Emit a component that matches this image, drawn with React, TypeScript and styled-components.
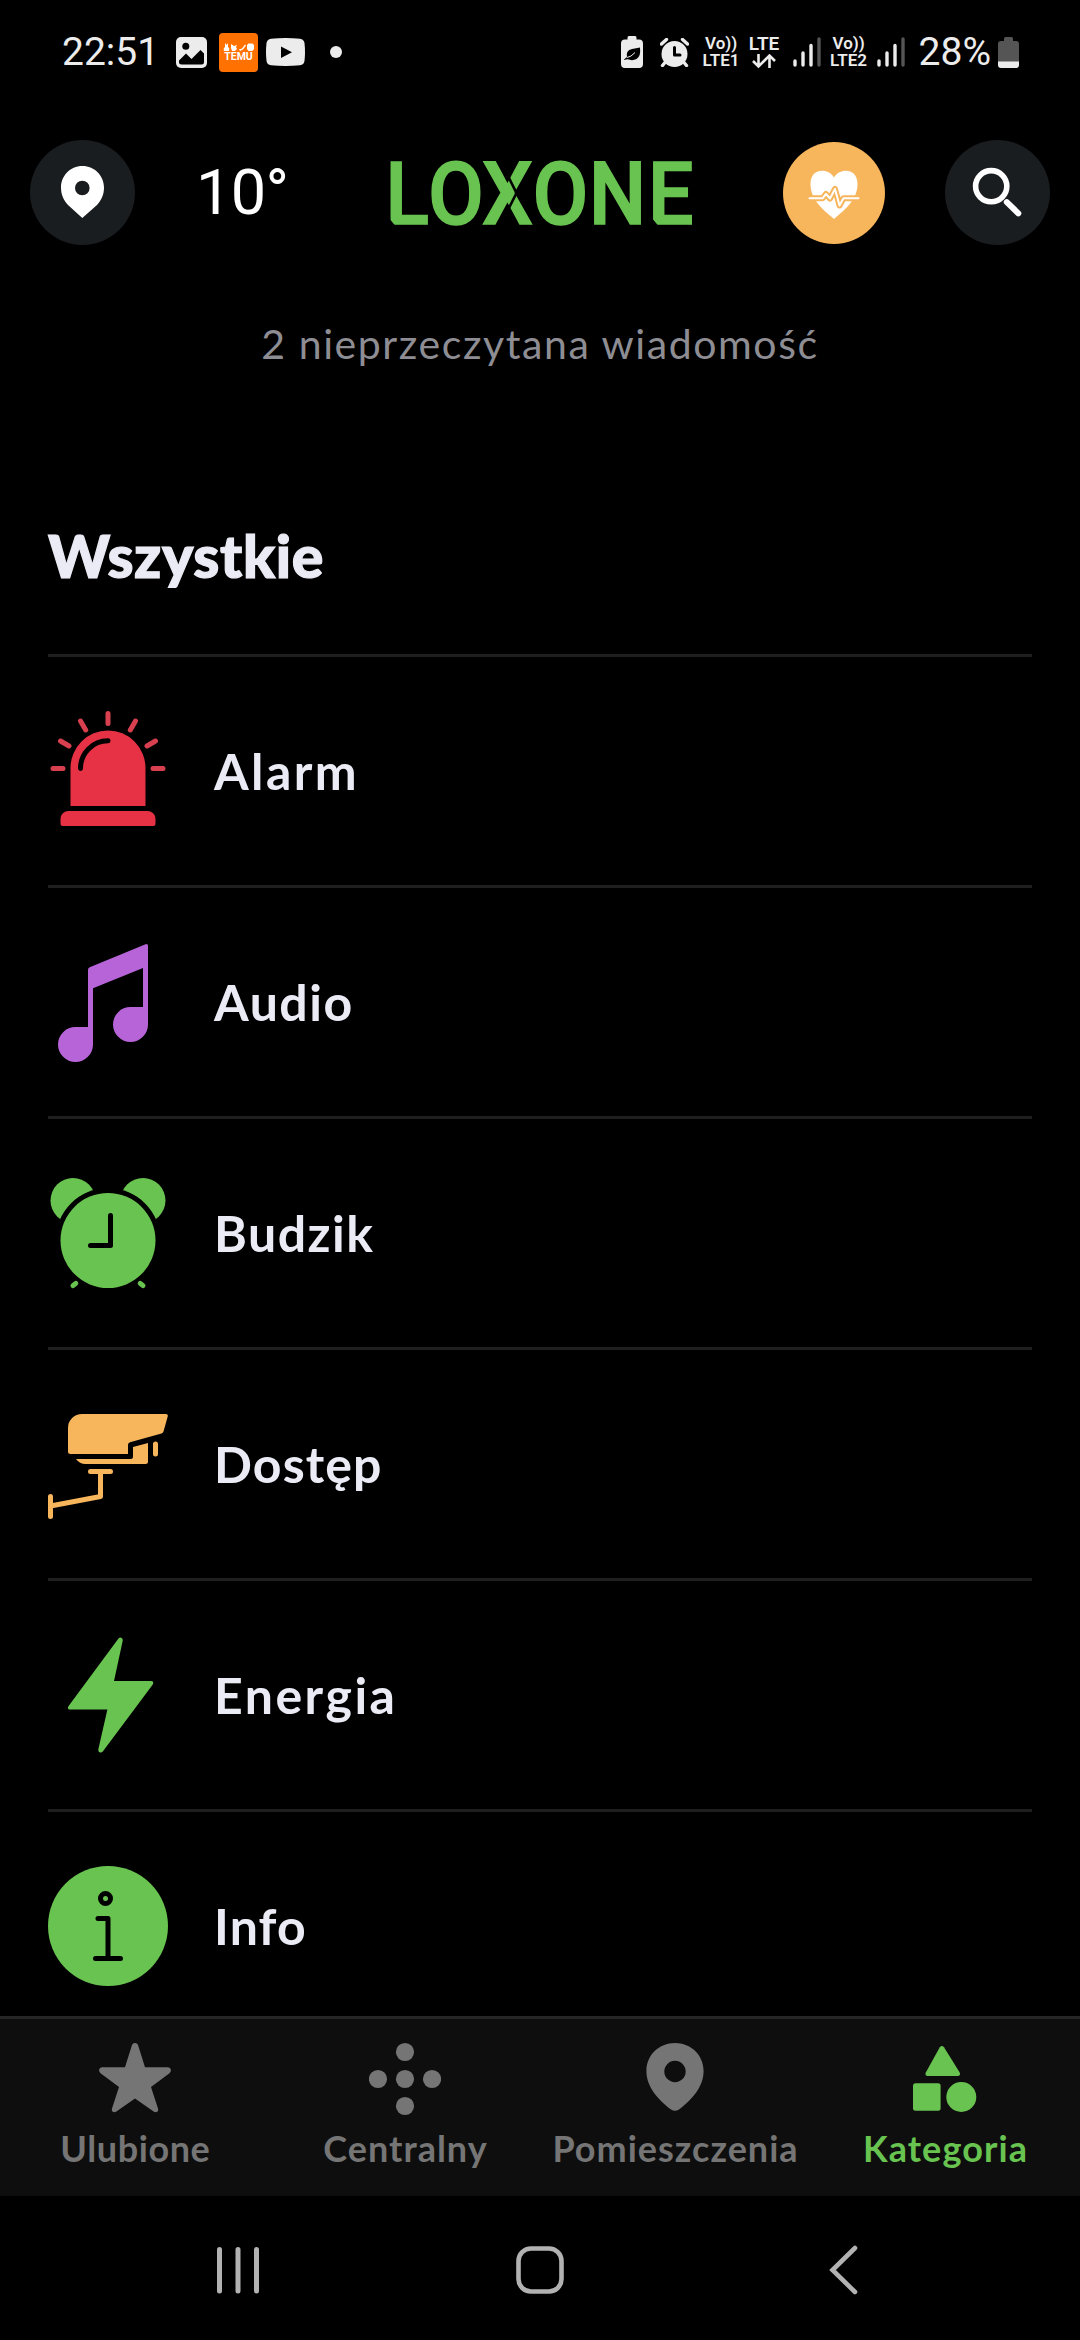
import React from "react";
import styled, { createGlobalStyle } from "styled-components";

const GREEN = "#69C350";
const RED = "#E73246";
const ORANGE = "#F7B55C";
const PURPLE = "#B764D9";
const STATUS = "#ECECEC";
const brand = '"Lato", "Open Sans", sans-serif';
const system = '"Roboto", "Noto Sans", sans-serif';

const GlobalStyle = createGlobalStyle`
  * { box-sizing: border-box; }
  body { margin: 0; background: #000; }
`;

const Screen = styled.div`
  width: 1080px;
  height: 2340px;
  display: flex;
  flex-direction: column;
  background: #000;
  overflow: hidden;
  white-space: nowrap;
  svg { display: block; flex: none; }
`;

/* ---------- status bar ---------- */
const StatusBar = styled.header`
  height: 104px;
  flex: none;
  padding: 0 61px 0 62px;
  display: flex;
  justify-content: space-between;
  align-items: center;
  font-family: ${system};
  color: ${STATUS};
`;
const StatusGroup = styled.div`
  display: flex;
  align-items: center;
  height: 40px;
`;
const StatusText = styled.span<{ $width: number }>`
  width: ${(p) => p.$width}px;
  font-size: 39px;
  line-height: 40px;
`;
const Slot = styled.div<{ $left: number }>`
  margin-left: ${(p) => p.$left}px;
  flex: none;
`;
const TemuBadge = styled.div`
  width: 39px;
  height: 39px;
  border-radius: 4px;
  background: #ff7100;
  color: #fff;
  display: flex;
  flex-direction: column;
  align-items: center;
  padding-top: 10px;
  font-size: 10.5px;
  line-height: 11px;
  font-weight: 700;
`;
const Carrier = styled.div<{ $width: number }>`
  width: ${(p) => p.$width}px;
  display: flex;
  flex-direction: column;
  align-items: center;
  font-weight: 600;
  font-size: 17px;
  line-height: 17px;
`;
const NetworkType = styled(Carrier)`
  font-size: 19px;
`;

/* ---------- app header ---------- */
const TopBar = styled.div`
  height: 177px;
  flex: none;
  padding: 0 30px;
  display: flex;
  align-items: center;
`;
const Round = styled.div<{ $size: number; $color: string; $left?: number }>`
  width: ${(p) => p.$size}px;
  height: ${(p) => p.$size}px;
  margin-left: ${(p) => p.$left ?? 0}px;
  border-radius: 50%;
  background: ${(p) => p.$color};
  flex: none;
`;
const Temperature = styled.div`
  width: 169px;
  margin-left: 61px;
  font-family: ${system};
  font-size: 63px;
  line-height: 70px;
  letter-spacing: -0.7px;
  color: #fff;
`;
const Message = styled.p`
  margin: 0;
  height: 128px;
  flex: none;
  padding-top: 36px;
  text-align: center;
  font-family: ${brand};
  font-size: 41px;
  line-height: 54px;
  letter-spacing: 1.57px;
  color: #8d8d93;
`;

/* ---------- category list ---------- */
const Content = styled.main`
  flex: none;
  height: 1607px;
  padding: 0 48px;
  overflow: hidden;
`;
const Heading = styled.h1`
  margin: 0;
  height: 245px;
  padding-top: 111px;
  font-family: ${brand};
  font-weight: 900;
  font-size: 59px;
  line-height: 72px;
  letter-spacing: 0.6px;
  -webkit-text-stroke: 1.2px #ebebf5;
  color: #ebebf5;
`;
const Row = styled.div`
  height: 231px;
  border-top: 3px solid #1f1f1f;
  display: flex;
  align-items: center;
  gap: 46px;
`;
const RowLabel = styled.span<{ $spacing: number }>`
  font-family: ${brand};
  font-weight: 700;
  font-size: 50px;
  line-height: 60px;
  letter-spacing: ${(p) => p.$spacing}px;
  color: #ebebf5;
`;

/* ---------- bottom bars ---------- */
const TabBar = styled.nav`
  height: 180px;
  flex: none;
  border-top: 3px solid #262626;
  background: #0e0e0e;
  display: grid;
  grid-template-columns: repeat(4, 1fr);
`;
const Tab = styled.div<{ $active?: boolean }>`
  display: flex;
  flex-direction: column;
  align-items: center;
  padding-top: 20px;
  gap: 9px;
  color: ${(p) => (p.$active ? GREEN : "#757575")};
`;
const TabLabel = styled.span<{ $spacing: number }>`
  font-family: ${brand};
  font-weight: 700;
  font-size: 36px;
  line-height: 44px;
  letter-spacing: ${(p) => p.$spacing}px;
  margin-right: -${(p) => p.$spacing}px;
`;
const SystemNav = styled.footer`
  height: 144px;
  flex: none;
  padding: 4px 214px 0;
  display: flex;
  align-items: center;
  justify-content: space-between;
`;

const Signal = () => (
  <svg width="28" height="30" viewBox="0 0 28 30" stroke={STATUS} strokeWidth="3.4" strokeLinecap="round">
    <path d="M2 24v4M10 16v12M18 8.500v19.500" />
    <path d="M26 2v26" stroke="#555" />
  </svg>
);

const VoLte = ({ line, width }: { line: string; width: number }) => (
  <Carrier $width={width}>
    <span>Vo))</span>
    <span>{line}</span>
  </Carrier>
);

const Logo = () => (
  <svg width="350" height="130" viewBox="365 127 350 130" overflow="visible">
    <text
      transform="scale(.92 1)"
      x="418.900 465.600 524 579 640.300 704.300"
      y="223"
      fontFamily="Roboto, sans-serif"
      fontWeight="500"
      fontSize="87.500"
      fill={GREEN}
      stroke={GREEN}
      strokeWidth="1.600"
    >
      LOXONE
    </text>
    <path d="M507 173L516.500 192L507 211" fill="none" stroke="#000" strokeWidth="2.600" />
    <path d="M388 216v9h7.500zM651 216v9h7.500z" />
  </svg>
);

const AlarmIcon = () => (
  <svg width="120" height="120" fill={RED}>
    <path d="M22.500 95V57a37.500 37.500 0 0 1 75 0v38z" />
    <path d="M12.500 112.500V108a8 8 0 0 1 8-8h79a8 8 0 0 1 8 8v4.500q0 2.500-2.500 2.500H15q-2.500 0-2.500-2.500z" />
    <path d="M32.500 57.500A27.500 27.500 0 0 1 60 29.800" fill="none" stroke="#000" strokeWidth="5" strokeLinecap="round" />
    <path
      d="M60 2.500v10M5 57.500h10M105 57.500h10M12.500 30l8.500 5M107.500 30l-8.500 5M32.500 10l5.200 9M87.500 10l-5.200 9"
      stroke="#D9404F"
      strokeWidth="5"
      strokeLinecap="round"
    />
  </svg>
);
const AudioIcon = () => (
  <svg width="120" height="120" fill={PURPLE}>
    <path d="M45 102.500A17.500 17.500 0 1 1 27.500 85H40V28q0-2 1.700-2.700L97 2.400q3-1 3 1.600v78.500A17.500 17.500 0 1 1 82.500 65H95V26L45 46.300z" />
  </svg>
);
const ClockIcon = () => (
  <svg width="120" height="120" fill={GREEN}>
    <circle cx="25" cy="27.500" r="22.500" />
    <circle cx="95" cy="27.500" r="22.500" />
    <circle cx="60" cy="67.500" r="52.500" fill="#000" />
    <circle cx="60" cy="67.500" r="47.500" />
    <path d="M62.500 42.500v30h-20" fill="none" stroke="#000" strokeWidth="5" strokeLinecap="round" strokeLinejoin="round" />
    <path d="M25 112.700l2.800-2.400M95 112.700l-2.800-2.400" stroke={GREEN} strokeWidth="5" strokeLinecap="round" />
  </svg>
);
const CameraIcon = () => (
  <svg width="120" height="120" fill={ORANGE}>
    <path d="M34 10h84q2.300 0 1.700 2.500l-4.200 15q-.5 1.600-2 2L82 38.300q-2 .5-2 2.500V50H22.500Q20 50 20 47.500V24a14 14 0 0 1 14-14z" />
    <path d="M28 55h54.500q2.500 0 2.500-2.500V43l15-4v18.500q0 2.500-2.500 2.500h-60q-6 0-9.500-5z" />
    <path
      d="M107.500 40v10M42.500 67.500h20M52.500 67.500v25l-50 9.500M2.500 92.500v20"
      fill="none"
      stroke={ORANGE}
      strokeWidth="5"
      strokeLinecap="round"
      strokeLinejoin="round"
    />
  </svg>
);
const BoltIcon = () => (
  <svg width="120" height="120" fill={GREEN}>
    <path d="M70.500 3.400q1.600-1.400 3.200-.5q1.400.8 1 2.900L66 46h37q2 0 2.200 1.300q.2 1.200-.6 2.500L55 116.200q-1.600 1.800-3.400 1q-1.600-.7-1.300-2.700L59.400 74.500H22q-1.900 0-2.100-1.300q-.1-1 .7-2.200z" />
  </svg>
);
const InfoIcon = () => (
  <svg width="120" height="120" fill="none" stroke="#000" strokeWidth="5" strokeLinecap="round" strokeLinejoin="round">
    <circle cx="60" cy="60" r="60" fill={GREEN} stroke="none" />
    <circle cx="57.500" cy="32.500" r="5" />
    <path d="M50 52.500h10v40M47.500 92.500h25" />
  </svg>
);

const categories = [
  { label: "Alarm", icon: <AlarmIcon />, spacing: 2.4 },
  { label: "Audio", icon: <AudioIcon />, spacing: 1.5 },
  { label: "Budzik", icon: <ClockIcon />, spacing: 1.5 },
  { label: "Dostęp", icon: <CameraIcon />, spacing: 1.1 },
  { label: "Energia", icon: <BoltIcon />, spacing: 2.5 },
  { label: "Info", icon: <InfoIcon />, spacing: 1.2 },
];

const tabs = [
  {
    label: "Ulubione",
    spacing: 0.6,
    icon: (
      <path d="M32.600 4.200Q33.400 1 36 1t3.400 3.200L46 25.200h23q2.500 0 2.900 2.500q.3 2.300-1.400 3.500L52 45l7 21.500q.6 2.200-.8 3.200q-1.700 1-3.600-.1L36 56.500L17.400 69.600q-1.900 1.100-3.600.1q-1.400-1-.8-3.200L20 45L1.500 31.200Q-.2 30 .1 27.700Q.5 25.200 3 25.200h23z" />
    ),
  },
  {
    label: "Centralny",
    spacing: 1,
    icon: (
      <>
        <circle cx="36" cy="10" r="9.100" />
        <circle cx="9" cy="37" r="9.100" />
        <circle cx="36" cy="37" r="9.100" />
        <circle cx="63" cy="37" r="9.100" />
        <circle cx="36" cy="64" r="9.100" />
      </>
    ),
  },
  {
    label: "Pomieszczenia",
    spacing: 1,
    icon: (
      <path
        fillRule="evenodd"
        d="M36 1C52 1 64.600 13 64.600 29c0 16-12 29-24.600 38.500q-4 2.500-8 0C19.400 58 7.400 45 7.400 29C7.400 13 20 1 36 1zm0 17.800a10.700 10.700 0 1 0 0 21.400a10.700 10.700 0 0 0 0-21.400z"
      />
    ),
  },
  {
    label: "Kategoria",
    spacing: 1.1,
    active: true,
    icon: (
      <>
        <path d="M30.800 5.200q2-2.600 4.200 0L50.700 30.500q1.300 3.300-2.200 3.500H18.800q-3.300-.2-2-3.500z" />
        <rect x="4" y="41.300" width="27.600" height="27.400" rx="2.500" />
        <circle cx="52.300" cy="55" r="15" />
      </>
    ),
  },
];

export default function App() {
  return (
    <Screen>
      <GlobalStyle />
      <StatusBar>
        <StatusGroup>
          <StatusText $width={94}>22:51</StatusText>
          <Slot $left={20}>
            <svg width="31" height="31" viewBox="0 0 31 31">
              <rect width="31" height="31" rx="5" fill={STATUS} />
              <circle cx="9.800" cy="9.300" r="3.500" fill="#000" />
              <path d="M3 23.500l7-7 5.500 5.500 9-9 3.500 3.500V25q0 2.500-2.500 2.500h-20Q3 27.500 3 25z" fill="#000" />
            </svg>
          </Slot>
          <Slot $left={12}>
            <TemuBadge>
              <svg width="31" height="8" viewBox="0 0 31 8" fill="#fff">
                <path d="M1 8q-1-3 1-4V0l1.500 2L5 0v4q2 1 1 4zM8 1l3 2 3-1-1 2 1 2-2 2H9L8 5zM16 6.500l3-1 3-4 1 1-3 4-3 1.500zM24 2l1.500-1.500h4L31 2v4l-1.500 2h-4L24 6z" />
              </svg>
              <span>TEMU</span>
            </TemuBadge>
          </Slot>
          <Slot $left={8}>
            <svg width="39" height="28" viewBox="0 0 39 28">
              <path d="M5 .8Q19.500-.8 34 .8q4 .5 4.500 4.500q1 8.700 0 17.400q-.5 4-4.500 4.500q-14.500 1.600-29 0Q1 26.700.5 22.700q-1-8.700 0-17.400Q1 1.300 5 .8z" fill={STATUS} />
              <path d="M15 8.500v11.500l11-5.700z" fill="#000" />
            </svg>
          </Slot>
          <Slot $left={25}>
            <Round $size={12} $color={STATUS} />
          </Slot>
        </StatusGroup>
        <StatusGroup>
          <svg width="22" height="32" viewBox="0 0 22 32">
            <path d="M6.500 3.500V1.500Q6.500 0 8 0h6q1.500 0 1.500 1.500v2H18q4 0 4 4V28q0 4-4 4H4q-4 0-4-4V7.500q0-4 4-4z" fill={STATUS} />
            <path d="M3 23.500q2-2 3-2.500q-1.500-6.500 5-8l8-1.500q1 9-3.500 11.500q-4 2-7.500.5q-2-.5-5 0.500z" fill="#000" />
            <path d="M6 21.500q4-.5 8-5" stroke={STATUS} fill="none" />
          </svg>
          <Slot $left={17}>
            <svg width="29" height="29" viewBox="0 0 29 29">
              <circle cx="14.500" cy="16" r="13" fill={STATUS} />
              <path d="M1.500 6l5-4.500M27.500 6l-5-4.500M5 24.500l-2.500 3M24 24.500l2.500 3" stroke={STATUS} strokeWidth="3.400" strokeLinecap="round" />
              <path d="M14.500 9.500v7.500h5.500" fill="none" stroke="#000" strokeWidth="3" strokeLinecap="round" strokeLinejoin="round" />
            </svg>
          </Slot>
          <Slot $left={13}>
            <VoLte line="LTE1" width={39} />
          </Slot>
          <Slot $left={7}>
            <NetworkType $width={33}>
              <span>LTE</span>
              <svg width="24" height="17" viewBox="0 0 24 17" fill="none" stroke={STATUS} strokeWidth="2.600">
                <path d="M6.500 2v12M1 9l5.500 5.500L12 9M17.500 16V4M12 9l5.500-5.500L23 9" />
              </svg>
            </NetworkType>
          </Slot>
          <Slot $left={12}>
            <Signal />
          </Slot>
          <Slot $left={8}>
            <VoLte line="LTE2" width={40} />
          </Slot>
          <Slot $left={8}>
            <Signal />
          </Slot>
          <Slot $left={14}>
            <StatusText $width={72}>28%</StatusText>
          </Slot>
          <Slot $left={7}>
            <svg width="21" height="31" viewBox="0 0 21 31">
              <path d="M6 4V1.500Q6 0 7.500 0h6Q15 0 15 1.500V4h3q3 0 3 3v18H0V7q0-3 3-3z" fill="#555" />
              <path d="M0 24.500h21V28q0 3-3 3H3q-3 0-3-3z" fill={STATUS} />
            </svg>
          </Slot>
        </StatusGroup>
      </StatusBar>

      <TopBar>
        <Round $size={105} $color="#191D1F">
          <svg width="105" height="105">
            <path
              fillRule="evenodd"
              fill="#fff"
              d="M52.300 26C65 26 74 36 74 47.500c0 8-3 13-7 17.500L52.300 78L38 65c-4-4.500-7-9.500-7-17.500C31 36 40 26 52.300 26zm0 14.700a7.300 7.300 0 1 0 0 14.600a7.300 7.300 0 0 0 0-14.600z"
            />
          </svg>
        </Round>
        <Temperature>10°</Temperature>
        <Logo />
        <Round $size={102} $color={ORANGE} $left={68}>
          <svg width="102" height="102" viewBox="783 141 102 102">
            <path
              fill="#fff"
              d="M834 176.500C839 167 857.500 166 857.500 183c0 15-11.500 25-23.500 35c-12-10-23.500-20-23.500-35C810.500 166 829 167 834 176.500z"
            />
            <g fill="none" strokeLinecap="round" strokeLinejoin="round">
              <path d="M808 197.300h14.500l3.500-4.300 4 4.500 5-9.500 4.500 16.500 4-7.200H860" stroke={ORANGE} strokeWidth="6" />
              <path d="M809.500 197.300h13l3.500-4.300 4 4.500 5-9.500 4.500 16.500 4-7.200H858.500" stroke="#fff" strokeWidth="2" />
            </g>
          </svg>
        </Round>
        <Round $size={105} $color="#191D1F" $left={60}>
          <svg width="105" height="105" fill="none" stroke="#fff" strokeLinecap="round">
            <circle cx="46.200" cy="46.200" r="15.600" strokeWidth="5.600" />
            <path d="M61.800 62.200L73.300 73.300" strokeWidth="6" />
          </svg>
        </Round>
      </TopBar>
      <Message>2 nieprzeczytana wiadomość</Message>

      <Content>
        <Heading>Wszystkie</Heading>
        {categories.map((c) => (
          <Row key={c.label}>
            {c.icon}
            <RowLabel $spacing={c.spacing}>{c.label}</RowLabel>
          </Row>
        ))}
      </Content>

      <TabBar>
        {tabs.map((t) => (
          <Tab key={t.label} $active={t.active}>
            <svg width="72" height="78" viewBox="0 -3 72 78" fill="currentColor">
              {t.icon}
            </svg>
            <TabLabel $spacing={t.spacing}>{t.label}</TabLabel>
          </Tab>
        ))}
      </TabBar>

      <SystemNav>
        <svg width="50" height="52" viewBox="0 0 50 52" stroke="#B2B2B2" strokeWidth="5" strokeLinecap="round">
          <path d="M5.500 5.500v41.500M24 5.500v41.500M42.500 5.500v41.500" />
        </svg>
        <svg width="52" height="52" viewBox="0 0 52 52" fill="none" stroke="#B2B2B2" strokeWidth="4.600">
          <rect x="4.500" y="4.500" width="43" height="43" rx="12.500" />
        </svg>
        <svg width="50" height="52" viewBox="0 0 50 52" fill="none" stroke="#B2B2B2" strokeWidth="4.600" strokeLinecap="round">
          <path d="M39 4L16.500 26L39 48" />
        </svg>
      </SystemNav>
    </Screen>
  );
}
